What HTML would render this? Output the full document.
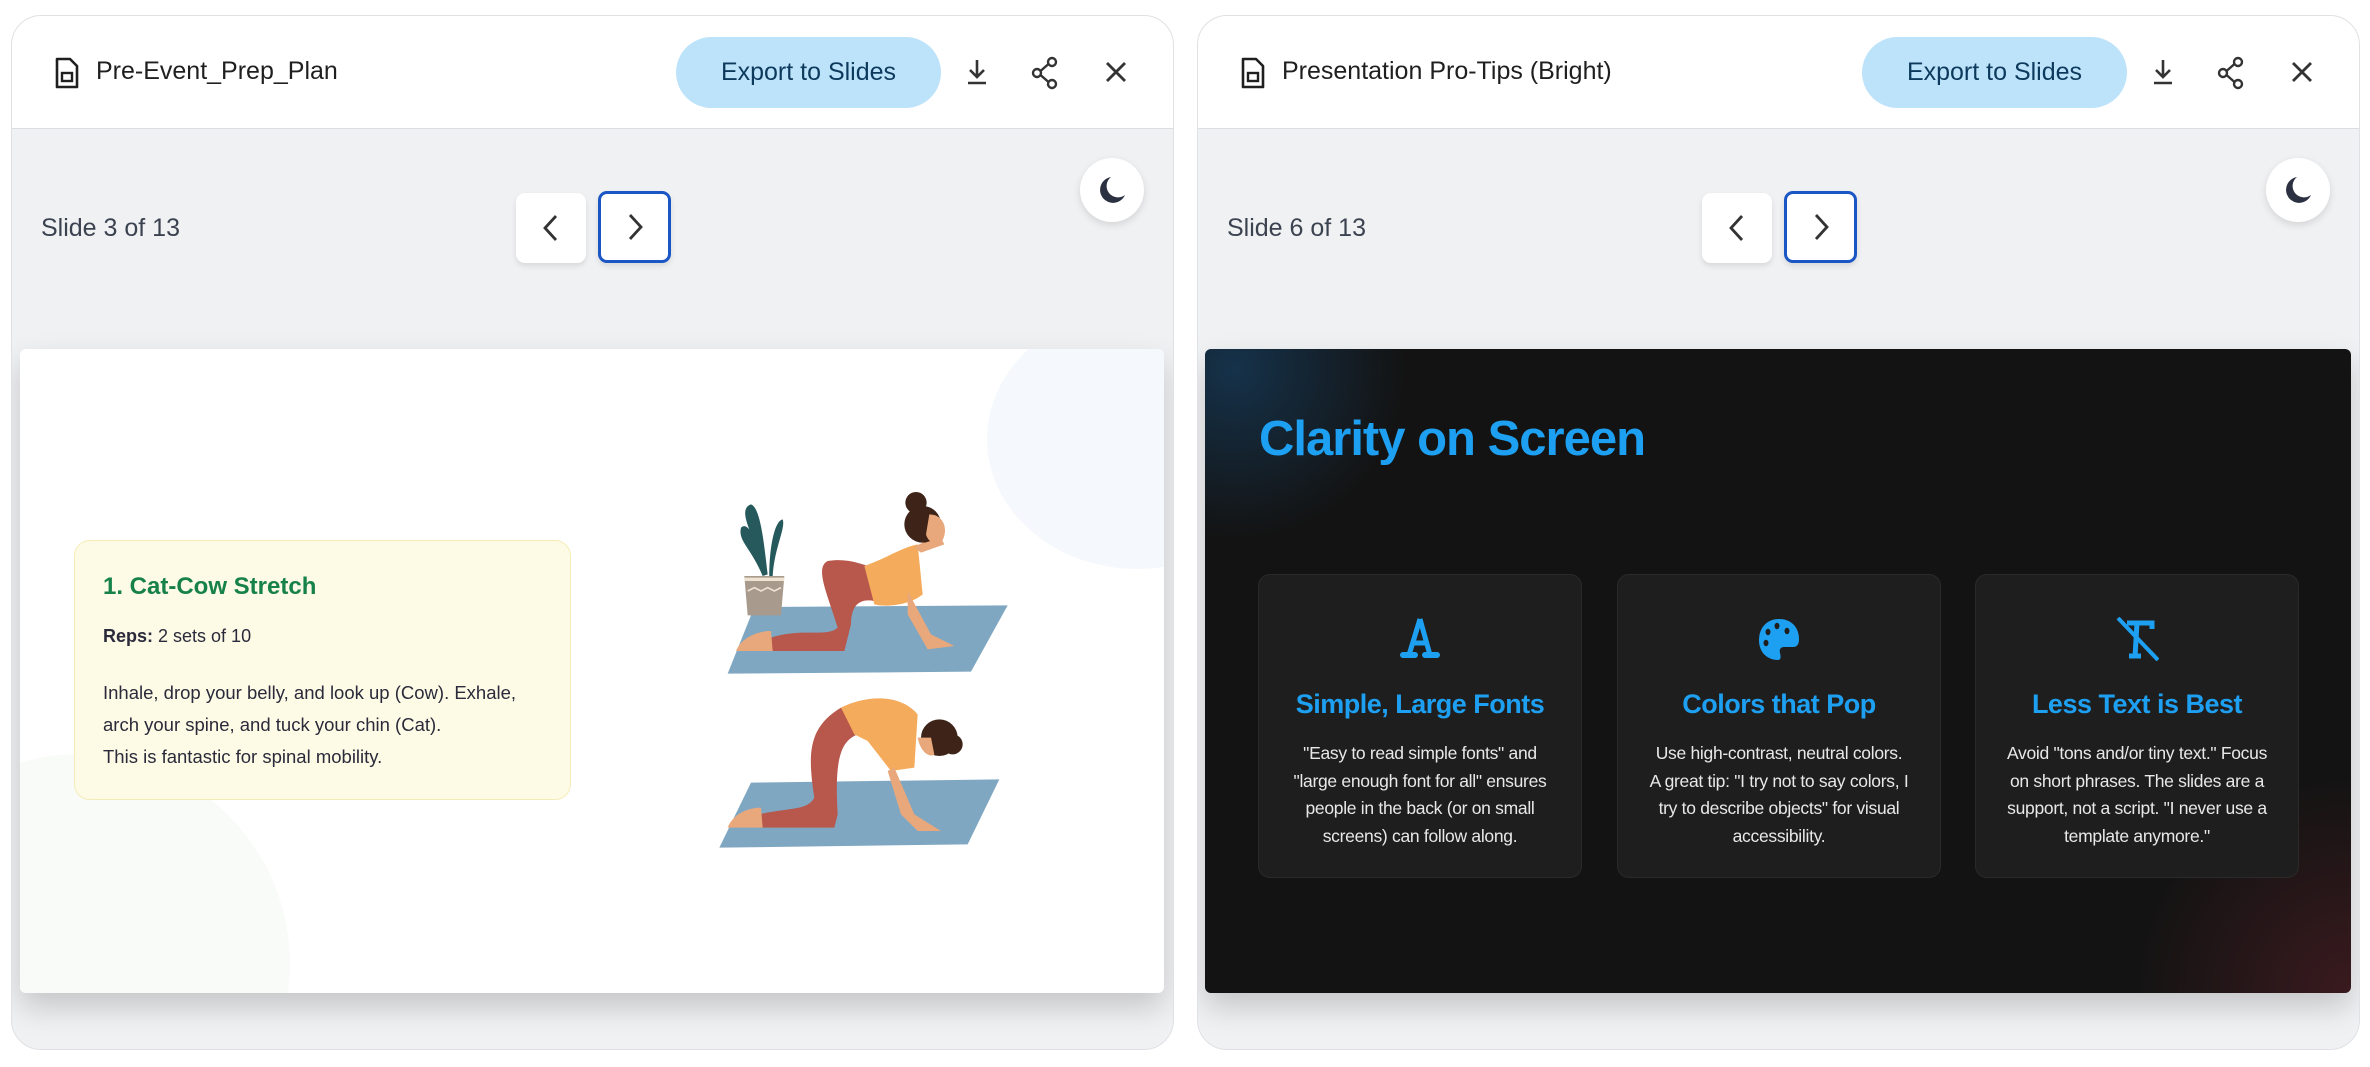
<!DOCTYPE html>
<html><head><meta charset="utf-8"><style>
*{box-sizing:border-box;margin:0;padding:0}
html,body{width:2370px;height:1067px;overflow:hidden}
body{background:#fff;position:relative;font-family:"Liberation Sans",Arial,sans-serif}
.panel{position:absolute;top:15px;width:1163px;height:1035px;border:1.5px solid #dfe1e5;border-radius:30px;background:#f0f1f3;overflow:hidden}
.hdr{position:absolute;left:0;top:0;right:0;height:113px;background:#fff;border-bottom:1.5px solid #dcdde0}
.ttl{position:absolute;left:84px;top:41px;font-size:25px;color:#1f1f1f}
.fic{position:absolute;left:42px;top:41px}
.exp{position:absolute;left:664px;top:21px;width:265px;height:71px;border-radius:36px;background:#bde3fb;color:#0d3a5c;font-size:25px;text-align:center;line-height:71px}
.ic{position:absolute;top:40px}
.slabel{position:absolute;left:29px;top:198px;font-size:25px;color:#3c4350;font-weight:500}
.nb{position:absolute;top:177px;width:70px;height:70px;border-radius:9px;background:#fff;box-shadow:0 3px 6px rgba(0,0,0,.1)}
.nb.n{border:3px solid #1a56c4;width:73px;height:72px;top:175px}
.moon{position:absolute;left:1068px;top:142px;width:64px;height:64px;border-radius:50%;background:#fff;box-shadow:0 3px 8px rgba(0,0,0,.12)}
.slide{position:absolute;top:333px;height:644px;border-radius:6px;overflow:hidden;box-shadow:0 14px 30px rgba(0,0,0,.18)}
.card{position:absolute;top:225px;width:324px;height:304px;background:#1e1e1e;border:1.5px solid #2a2a2a;border-radius:12px;text-align:center}
.card h3{position:absolute;top:114px;left:0;right:0;font-size:27px;color:#1ea0f2;font-weight:bold;letter-spacing:-.5px}
.card p{position:absolute;top:165px;left:0;right:0;font-size:17.5px;line-height:27.5px;color:#e8e8e8;letter-spacing:-.3px;white-space:nowrap}
.card svg{position:absolute;top:42px;left:50%;margin-left:-22px}
</style></head><body>

<div class="panel" style="left:11px">
 <div class="hdr">
  <svg class="fic" width="26" height="32" viewBox="0 0 26 32"><path d="M3 2h13l7 7v21H3z" fill="none" stroke="#1f1f1f" stroke-width="2.6" stroke-linejoin="round"/><rect x="8" y="16" width="10" height="8" fill="none" stroke="#1f1f1f" stroke-width="2.4"/></svg>
  <div class="ttl">Pre-Event_Prep_Plan</div>
  <div class="exp">Export to Slides</div>
  <svg class="ic" style="left:950px" width="30" height="32" viewBox="0 0 30 32"><path d="M15 4v16M8 14l7 7 7-7M6 27h18" fill="none" stroke="#333" stroke-width="2.6"/></svg>
  <svg class="ic" style="left:1018px" width="30" height="34" viewBox="0 0 30 34"><circle cx="22" cy="6" r="4" fill="none" stroke="#333" stroke-width="2.4"/><circle cx="7" cy="17" r="4" fill="none" stroke="#333" stroke-width="2.4"/><circle cx="22" cy="28" r="4" fill="none" stroke="#333" stroke-width="2.4"/><path d="M10.5 15L18.5 8M10.5 19l8 7" stroke="#333" stroke-width="2.4"/></svg>
  <svg class="ic" style="left:1092px;top:44px" width="24" height="24" viewBox="0 0 24 24"><path d="M3 3l18 18M21 3L3 21" stroke="#333" stroke-width="2.8"/></svg>
 </div>
 <div class="slabel">Slide 3 of 13</div>
 <div class="nb" style="left:504px"><svg width="70" height="70" viewBox="0 0 70 70"><path d="M40 23L29 35l11 12" fill="none" stroke="#333" stroke-width="2.8"/></svg></div>
 <div class="nb n" style="left:586px"><svg width="67" height="66" viewBox="0 0 67 66"><path d="M29 21l11 12-11 12" fill="none" stroke="#333" stroke-width="2.8"/></svg></div>
 <div class="moon"><svg width="64" height="64" viewBox="0 0 64 64"><path d="M31 19a13 13 0 1 0 14 18a11 11 0 0 1-14-18z" fill="#2b3140"/></svg></div>
 <div class="slide" style="left:8px;width:1144px;background:#fff">
  <div style="position:absolute;left:967px;top:-40px;width:300px;height:260px;border-radius:50%;background:#f5f9fd"></div>
  <div style="position:absolute;left:-150px;top:405px;width:420px;height:420px;border-radius:50%;background:#f8fbf7"></div>
  <div style="position:absolute;left:54px;top:191px;width:497px;height:260px;background:#fdfbe6;border:1.5px solid #f6ecb8;border-radius:16px">
   <div style="position:absolute;left:28px;top:32px;font-size:24px;font-weight:bold;color:#17814a">1. Cat-Cow Stretch</div>
   <div style="position:absolute;left:28px;top:85px;font-size:18px;color:#2a2a3a"><b>Reps:</b> 2 sets of 10</div>
   <div style="position:absolute;left:28px;top:136px;font-size:18.5px;line-height:32px;color:#2a2a3a">Inhale, drop your belly, and look up (Cow). Exhale,<br>arch your spine, and tuck your chin (Cat).<br>This is fantastic for spinal mobility.</div>
  </div>
  <svg style="position:absolute;left:681px;top:132px" width="330" height="380" viewBox="0 0 990 1140">
   <path d="M80 578L160 378L920 373L810 572Z" fill="#7fa7c1"/>
   <path d="M55 1100L150 905L895 895L800 1090Z" fill="#7fa7c1"/>
   <path d="M185 285C150 200 110 180 120 140C140 120 160 170 170 200C130 120 120 80 150 70C180 80 190 200 200 280Z" fill="#26595c"/>
   <path d="M205 285C205 200 220 120 245 115C255 140 220 200 215 285Z" fill="#26595c"/>
   <path d="M130 285h120l-10 118H140z" fill="#a89a8c"/>
   <path d="M130 295h120" stroke="#efe3d4" stroke-width="10"/>
   <path d="M140 330l20-10 20 10 20-10 20 10 20-10" fill="none" stroke="#efe3d4" stroke-width="5"/>
   <path d="M210 470C300 440 380 470 410 440C380 340 340 260 380 240C440 230 480 250 520 260L520 360C470 350 450 380 450 430L430 510L210 510Z" fill="#b8574b"/>
   <path d="M105 510C120 470 170 450 210 450L215 510Z" fill="#e8a87c"/>
   <path d="M490 255C560 230 600 200 650 190L665 340C630 370 560 380 520 370Z" fill="#f4ab5c"/>
   <path d="M620 330L690 460L760 495L680 505L620 400Z" fill="#e8a87c"/>
   <path d="M640 200C660 180 700 180 715 160L730 190L660 215Z" fill="#e8a87c"/>
   <circle cx="665" cy="130" r="55" fill="#3d2318"/>
   <circle cx="645" cy="65" r="32" fill="#3d2318"/>
   <path d="M685 100C730 100 745 150 720 185C700 195 680 180 675 160Z" fill="#e8a87c"/>
   <path d="M175 1000C260 980 320 990 340 950C320 820 320 740 420 680L470 760C420 780 400 830 410 1000L400 1040L175 1040Z" fill="#b8574b"/>
   <path d="M80 1040C95 1000 140 980 180 980L185 1040Z" fill="#e8a87c"/>
   <path d="M420 680C500 640 600 640 650 700L640 860L570 870L500 780L460 760Z" fill="#f4ab5c"/>
   <path d="M580 860L640 1000L720 1050L650 1050L600 1000L560 870Z" fill="#e8a87c"/>
   <circle cx="715" cy="770" r="55" fill="#3d2318"/>
   <circle cx="755" cy="790" r="30" fill="#3d2318"/>
   <path d="M650 770C660 820 690 830 700 820L690 770Z" fill="#e8a87c"/>
  </svg>
 </div>
</div>

<div class="panel" style="left:1197px">
 <div class="hdr">
  <svg class="fic" width="26" height="32" viewBox="0 0 26 32"><path d="M3 2h13l7 7v21H3z" fill="none" stroke="#1f1f1f" stroke-width="2.6" stroke-linejoin="round"/><rect x="8" y="16" width="10" height="8" fill="none" stroke="#1f1f1f" stroke-width="2.4"/></svg>
  <div class="ttl">Presentation Pro-Tips (Bright)</div>
  <div class="exp">Export to Slides</div>
  <svg class="ic" style="left:950px" width="30" height="32" viewBox="0 0 30 32"><path d="M15 4v16M8 14l7 7 7-7M6 27h18" fill="none" stroke="#333" stroke-width="2.6"/></svg>
  <svg class="ic" style="left:1018px" width="30" height="34" viewBox="0 0 30 34"><circle cx="22" cy="6" r="4" fill="none" stroke="#333" stroke-width="2.4"/><circle cx="7" cy="17" r="4" fill="none" stroke="#333" stroke-width="2.4"/><circle cx="22" cy="28" r="4" fill="none" stroke="#333" stroke-width="2.4"/><path d="M10.5 15L18.5 8M10.5 19l8 7" stroke="#333" stroke-width="2.4"/></svg>
  <svg class="ic" style="left:1092px;top:44px" width="24" height="24" viewBox="0 0 24 24"><path d="M3 3l18 18M21 3L3 21" stroke="#333" stroke-width="2.8"/></svg>
 </div>
 <div class="slabel">Slide 6 of 13</div>
 <div class="nb" style="left:504px"><svg width="70" height="70" viewBox="0 0 70 70"><path d="M40 23L29 35l11 12" fill="none" stroke="#333" stroke-width="2.8"/></svg></div>
 <div class="nb n" style="left:586px"><svg width="67" height="66" viewBox="0 0 67 66"><path d="M29 21l11 12-11 12" fill="none" stroke="#333" stroke-width="2.8"/></svg></div>
 <div class="moon"><svg width="64" height="64" viewBox="0 0 64 64"><path d="M31 19a13 13 0 1 0 14 18a11 11 0 0 1-14-18z" fill="#2b3140"/></svg></div>
 <div class="slide" style="left:7px;width:1146px;background:radial-gradient(circle at 30px 20px,#15324a 0,rgba(20,20,20,0) 170px),radial-gradient(circle at 1146px 644px,#3a1a1e 0,rgba(20,20,20,0) 220px),#131313">
  <div style="position:absolute;left:54px;top:62px;font-size:49px;font-weight:bold;color:#1ea0f2;letter-spacing:-1px">Clarity on Screen</div>
  <div class="card" style="left:53px">
   <svg width="44" height="42" viewBox="0 0 44 42"><path d="M22 2L11 38M22 2l10 36M15 26h14" stroke="#1ea0f2" stroke-width="5" fill="none"/><path d="M5 38h12M27 38h12" stroke="#1ea0f2" stroke-width="6" stroke-linecap="round"/></svg>
   <h3>Simple, Large Fonts</h3>
   <p>"Easy to read simple fonts" and<br>"large enough font for all" ensures<br>people in the back (or on small<br>screens) can follow along.</p>
  </div>
  <div class="card" style="left:412px">
   <svg width="44" height="44" viewBox="0 0 44 44"><path d="M22 2C9 2 2 12 2 23c0 14 10 20 19 20 3 0 3-4 2-7-1-4 1-6 4-6h9c5 0 6-4 6-8C42 10 34 2 22 2z" fill="#1ea0f2"/><ellipse cx="11" cy="15" rx="2.5" ry="3.2" fill="#1e1e1e"/><ellipse cx="20" cy="9" rx="2.5" ry="3.2" fill="#1e1e1e"/><ellipse cx="30" cy="14" rx="2.5" ry="3.2" fill="#1e1e1e"/><ellipse cx="9" cy="26" rx="2.5" ry="3.2" fill="#1e1e1e"/></svg>
   <h3>Colors that Pop</h3>
   <p>Use high-contrast, neutral colors.<br>A great tip: "I try not to say colors, I<br>try to describe objects" for visual<br>accessibility.</p>
  </div>
  <div class="card" style="left:770px">
   <svg width="44" height="44" viewBox="0 0 44 44"><path d="M12 6h25v6M22 6l-2 34M14 39h12" stroke="#1ea0f2" stroke-width="5" fill="none"/><path d="M3 1l40 42" stroke="#1ea0f2" stroke-width="4"/></svg>
   <h3>Less Text is Best</h3>
   <p>Avoid "tons and/or tiny text." Focus<br>on short phrases. The slides are a<br>support, not a script. "I never use a<br>template anymore."</p>
  </div>
 </div>
</div>
</body></html>
